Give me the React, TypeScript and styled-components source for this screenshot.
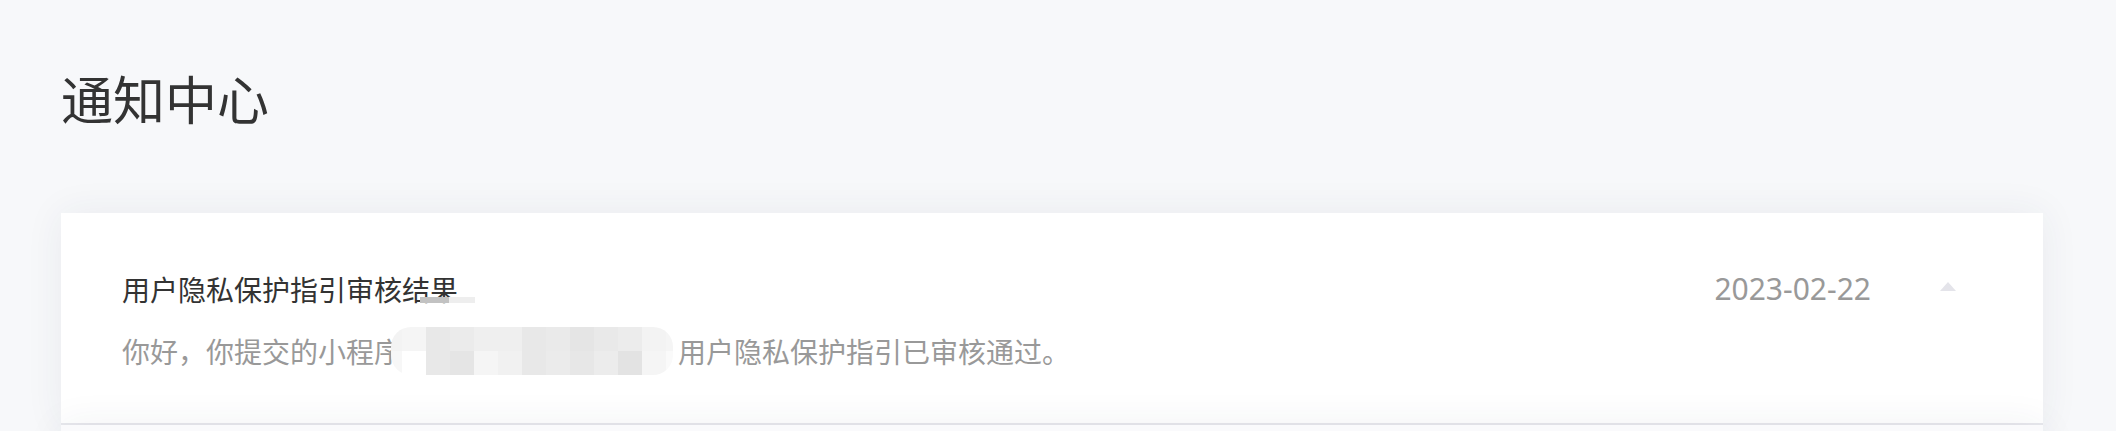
import React from "react";
import styled, { createGlobalStyle } from "styled-components";

const Global = createGlobalStyle`
  html, body {
    margin: 0;
    padding: 0;
    background: #f7f8fa;
  }
  body {
    font-family: "Noto Sans CJK SC", "Noto Sans", sans-serif;
  }
`;

const Page = styled.div`
  padding: 0 73px 0 61px;
`;

const PageTitle = styled.h1`
  margin: 0;
  padding-top: 70px;
  height: 213px;
  box-sizing: border-box;
  font-size: 52px;
  line-height: 56px;
  font-weight: 400;
  color: #333;
`;

const List = styled.div`
  display: flex;
  flex-direction: column;
`;

const Card = styled.div<{ $muted?: boolean }>`
  background: ${(p) => (p.$muted ? "#fafafc" : "#fff")};
  box-shadow: 0 0 36px rgba(40, 50, 90, 0.07);
  padding: 56px 87px 48px 61px;
  border-bottom: 2px solid #e8e8ed;
  display: flex;
  flex-direction: column;
  gap: 18px;
  min-height: ${(p) => (p.$muted ? "106px" : "0")};
`;

const Header = styled.div`
  display: flex;
  align-items: center;
  height: 40px;
`;

const Title = styled.div`
  flex: 1;
  font-size: 28px;
  line-height: 40px;
  color: #333;
`;

const DateText = styled.div`
  font-family: "Noto Sans", sans-serif;
  font-size: 30px;
  line-height: 40px;
  color: #999;
  margin-right: 69px;
`;

const Caret = styled.span`
  width: 0;
  height: 0;
  border-left: 8.5px solid transparent;
  border-right: 8.5px solid transparent;
  border-bottom: 9px solid #e4e4ea;
  margin-top: -5px;
`;

const Body = styled.div`
  font-size: 28px;
  line-height: 48px;
  height: 48px;
  color: #999;
  display: flex;
  align-items: center;
  white-space: nowrap;
`;

const MosaicWrap = styled.span`
  position: relative;
  display: inline-flex;
  margin: 0 5px 0 -11px;
  &::before {
    content: "";
    position: absolute;
    left: 29px;
    top: -30px;
    width: 55px;
    height: 6px;
    background: linear-gradient(90deg, #c2c2c2 0 29px, #eeeeee 29px 55px);
  }
`;

const Mosaic = styled.span`
  display: grid;
  grid-template-columns: 11px repeat(11, 24px) 7px;
  grid-template-rows: 24px 24px;
  width: 282px;
  height: 48px;
  clip-path: inset(0 round 20px);
`;

const Cell = styled.span<{ $c: string }>`
  background: ${(p) => p.$c};
`;

const row1 = ["#f3f3f3", "#f5f5f5", "#e8e8e8", "#ebebeb", "#efefef", "#efefef", "#e8e8e8", "#eaeaea", "#e5e5e5", "#e9e9e9", "#ececec", "#f3f3f3", "#f5f5f5"];
const row2 = ["#f7f7f7", "#ffffff", "#e8e8e8", "#e5e5e5", "#f5f5f5", "#f1f1f1", "#e8e8e8", "#ebebeb", "#e7e7e7", "#ececec", "#e3e3e3", "#f5f5f5", "#fafafa"];

export default function App() {
  return (
    <>
      <Global />
      <Page>
        <PageTitle>通知中心</PageTitle>
        <List>
          <Card>
            <Header>
              <Title>用户隐私保护指引审核结果</Title>
              <DateText>2023-02-22</DateText>
              <Caret />
            </Header>
            <Body>
              你好，你提交的小程序
              <MosaicWrap>
                <Mosaic>
                  {[...row1, ...row2].map((c, i) => (
                    <Cell key={i} $c={c} />
                  ))}
                </Mosaic>
              </MosaicWrap>
              用户隐私保护指引已审核通过。
            </Body>
          </Card>
          <Card $muted />
        </List>
      </Page>
    </>
  );
}
